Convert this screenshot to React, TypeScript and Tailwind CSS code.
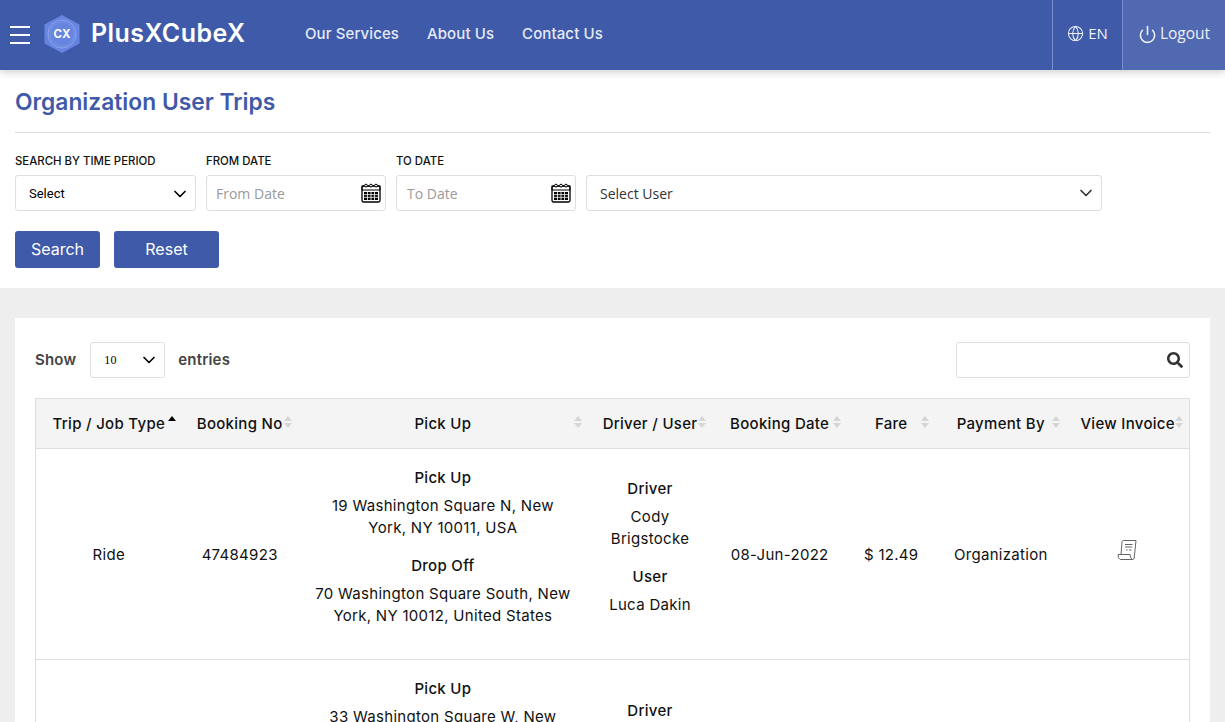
import React from 'react';
import { ChevronDown, Globe, Power } from 'lucide-react';
import { FaSearch } from 'react-icons/fa';

const columns = [
  { label: 'Trip / Job Type', width: 'w-[146px]', active: true },
  { label: 'Booking No', width: 'w-[116px]' },
  { label: 'Pick Up', width: 'w-[290px]' },
  { label: 'Driver / User', width: 'w-[124px]' },
  { label: 'Booking Date', width: 'w-[135px]' },
  { label: 'Fare', width: 'w-[88px]' },
  { label: 'Payment By', width: 'w-[131px]' },
  { label: 'View Invoice', width: 'w-[123px]' },
];

const trips = [
  {
    type: 'Ride',
    booking: '47484923',
    pickup: '19 Washington Square N, New York, NY 10011, USA',
    dropoff: '70 Washington Square South, New York, NY 10012, United States',
    driver: 'Cody Brigstocke',
    user: 'Luca Dakin',
    date: '08-Jun-2022',
    fare: '$ 12.49',
  },
  {
    type: 'Ride',
    booking: '47484917',
    pickup: '33 Washington Square W, New York, NY 10011, USA',
    dropoff: '70 Washington Square South, New York, NY 10012, United States',
    driver: 'Luca Dakin',
    user: 'Cody Dakin',
    date: '08-Jun-2022',
    fare: '$ 12.49',
  },
];

const CalendarIcon = () => (
  <svg width="20" height="20" viewBox="0 0 20 20" className="text-black">
    <rect x="1" y="3" width="18" height="16" rx="1.5" fill="none" stroke="currentColor" strokeWidth="1.3" />
    <rect x="1" y="3" width="18" height="4" fill="none" stroke="currentColor" strokeWidth="1" />
    <rect x="3" y="9" width="14" height="8" fill="currentColor" />
    <path d="M3 11.6h14M3 14.3h14M6.5 9v8M10 9v8M13.5 9v8" stroke="#fff" strokeWidth="0.8" />
    <circle cx="5" cy="2.6" r="1.4" fill="#fff" stroke="currentColor" />
    <circle cx="10" cy="2.6" r="1.4" fill="#fff" stroke="currentColor" />
    <circle cx="15" cy="2.6" r="1.4" fill="#fff" stroke="currentColor" />
  </svg>
);

const Logo = () => (
  <svg width="38" height="40" viewBox="0 0 38 40">
    <path d="M19 1 L36.5 10.5 V29.5 L19 39 L1.5 29.5 V10.5 Z" fill="#6685e0" />
    <circle cx="19" cy="20" r="14" fill="none" stroke="#9db2ee" strokeWidth="0.7" />
    <circle cx="19" cy="20" r="12" fill="none" stroke="#88a0e8" strokeWidth="0.5" />
    <text x="19" y="24" textAnchor="middle" fill="#fff" fontSize="11.5" fontWeight="700" fontFamily="Inter, sans-serif">CX</text>
  </svg>
);

const InvoiceIcon = () => (
  <svg width="20" height="20" viewBox="0 0 20 20" fill="none" stroke="#666" strokeWidth="1" className="mx-auto mb-[8px] -translate-x-[1px]">
    <path d="M4 14.5 L5 1.8 Q5.1 .5 6.4 .5 H19 L17.2 18 Q17 19.5 15.2 19.5" />
    <path d="M1 14.5 H13 Q13.2 18 15.2 19.5 H3.2 Q1 18.5 1 14.5 Z" />
    <path d="M8 4.5h7.5M8 7h7.2M9 10h1.5M12 10h2.5" />
  </svg>
);

const SortIcon = ({ active }: { active?: boolean }) => (
  <span className="absolute right-[5px] top-[17px] flex w-[10px] flex-col items-center gap-[2px]">
    <span className={`h-0 w-0 border-x-[4px] border-b-[5px] border-x-transparent ${active ? 'border-b-black' : 'border-b-[#d6d6d6]'}`} />
    {!active && <span className="h-0 w-0 border-x-[4px] border-t-[5px] border-x-transparent border-t-[#d6d6d6]" />}
  </span>
);

const Field = ({ label, width, children }: { label?: string; width: string; children: React.ReactNode }) => (
  <div className={`flex flex-col ${width}`}>
    <label className="mb-[6px] h-[17px] pt-[1px] text-[11.4px] leading-[16px] font-medium text-[#111]">{label}</label>
    {children}
  </div>
);

const DateInput = ({ placeholder, pad }: { placeholder: string; pad: string }) => (
  <div className={`flex h-[36px] items-center justify-between rounded-[3px] border border-[#dfdfdf] pr-[4px] ${pad} font-['Open_Sans',sans-serif] text-[14px] text-[#9a9a9a]`}>
    <span>{placeholder}</span>
    <CalendarIcon />
  </div>
);

export default function App() {
  return (
    <div className="flex h-screen flex-col overflow-hidden bg-[#eeeeee] font-['Inter',sans-serif] text-[#111]">
      <header className="z-10 flex h-[70px] shrink-0 items-stretch bg-[#3e5aa8] text-white shadow-[0_2px_8px_rgba(0,0,0,0.2)]">
        <div className="flex items-center pl-[10px]">
          <div className="flex w-[20px] flex-col gap-[6px]">
            <span className="h-[2px] bg-white" />
            <span className="h-[2px] bg-white" />
            <span className="h-[2px] bg-white" />
          </div>
          <div className="-mt-[2px] ml-[13px]"><Logo /></div>
          <span className="-mt-[2px] ml-[10px] w-[156px] text-[25px] font-semibold tracking-[0.45px]">PlusXCubeX</span>
        </div>
        <nav className="-mt-[2px] ml-[58px] flex items-center gap-[28px] text-[15px] font-medium tracking-[0.1px] text-[#e6eaf6]">
          <a>Our Services</a>
          <a>About Us</a>
          <a>Contact Us</a>
        </nav>
        <div className="ml-auto flex items-stretch font-['Open_Sans',sans-serif] text-[15px] text-[#eef1f9]">
          <div className="flex w-[71px] items-center justify-center gap-[4px] border-x border-[#7a8fc8] pb-[3px]">
            <Globe size={17} strokeWidth={1.5} />
            <span>EN</span>
          </div>
          <div className="flex w-[102px] items-center justify-center gap-[3px] bg-[#5069b0] pb-[2px]">
            <Power size={19} strokeWidth={2} />
            <span className="text-[15.5px]">Logout</span>
          </div>
        </div>
      </header>

      <section className="h-[218px] shrink-0 bg-white px-[15px]">
        <h1 className="h-[63px] border-b border-[#d9d9d9] pt-[17px] text-[22.8px] leading-[30px] font-semibold text-[#3e5aa8]">
          Organization User Trips
        </h1>
        <div className="mt-[19px] flex gap-[10px]">
          <Field label="SEARCH BY TIME PERIOD" width="w-[181px]">
            <div className="flex h-[36px] items-center justify-between rounded-[3px] border border-[#dfdfdf] pt-[1px] pr-[5px] pl-[13px] font-['Roboto',sans-serif] text-[13px] text-black">
              <span>Select</span>
              <ChevronDown size={20} strokeWidth={2} />
            </div>
          </Field>
          <Field label="FROM DATE" width="w-[180px]">
            <DateInput placeholder="From Date" pad="pl-[9px]" />
          </Field>
          <Field label="TO DATE" width="w-[180px]">
            <DateInput placeholder="To Date" pad="pl-[10px]" />
          </Field>
          <Field width="w-[516px]">
            <div className="flex h-[36px] items-center justify-between rounded-[3px] border border-[#dfdfdf] pr-[5px] pl-[13px] font-['Open_Sans',sans-serif] text-[14px] text-[#333]">
              <span>Select User</span>
              <ChevronDown size={20} strokeWidth={2} />
            </div>
          </Field>
        </div>
        <div className="mt-[20px] flex gap-[14px] text-[16px] text-white">
          <button className="h-[37px] w-[85px] rounded-[3px] bg-[#3e5aa8] pb-[1px]">Search</button>
          <button className="h-[37px] w-[105px] rounded-[3px] bg-[#3e5aa8] pb-[1px]">Reset</button>
        </div>
      </section>

      <main className="flex-1 px-[15px] pt-[30px]">
        <div className="bg-white px-[20px] pt-[24px]">
          <div className="flex h-[36px] items-center justify-between">
            <div className="flex items-center text-[15px] font-semibold tracking-[0.2px] text-[#444]">
              <span>Show</span>
              <div className="mr-[13px] ml-[14px] flex h-[36px] w-[75px] items-center justify-between rounded-[3px] border border-[#dfdfdf] pr-[5px] pl-[13px] font-['Liberation_Serif',serif] text-[12px] font-normal text-black">
                <span>10</span>
                <ChevronDown size={20} strokeWidth={2} />
              </div>
              <span>entries</span>
            </div>
            <div className="flex h-[36px] w-[234px] items-center justify-end rounded-[3px] border border-[#dfdfdf] pr-[6px] text-[#333]">
              <FaSearch size={16} />
            </div>
          </div>

          <table className="mt-[20px] w-[1155px] table-fixed border-collapse border border-[#dedede] text-[15px] tracking-[0.3px]">
            <colgroup>
              {columns.map((col) => <col key={col.label} className={col.width} />)}
            </colgroup>
            <thead>
              <tr className="h-[50px] border-b border-[#dedede] bg-[#f4f4f4]">
                {columns.map((col) => (
                  <th key={col.label} className="relative whitespace-nowrap pt-[2px] font-medium">
                    {col.label}
                    <SortIcon active={col.active} />
                  </th>
                ))}
              </tr>
            </thead>
            <tbody>
              {trips.map((trip) => (
                <tr key={trip.booking} className="h-[211px] border-b border-[#dedede] text-center">
                  <td className="pt-[2px]">{trip.type}</td>
                  <td className="pt-[2px]">{trip.booking}</td>
                  <td className="px-[15px] pb-[14px] leading-[22px]">
                    <div className="font-medium">Pick Up</div>
                    <div className="mt-[6px]">{trip.pickup}</div>
                    <div className="mt-[16px] font-medium">Drop Off</div>
                    <div className="mt-[6px]">{trip.dropoff}</div>
                  </td>
                  <td className="px-[15px] pb-[14px] leading-[22px]">
                    <div className="font-medium">Driver</div>
                    <div className="mt-[6px]">{trip.driver}</div>
                    <div className="mt-[16px] font-medium">User</div>
                    <div className="mt-[6px]">{trip.user}</div>
                  </td>
                  <td className="pt-[2px]">{trip.date}</td>
                  <td className="pt-[2px]">{trip.fare}</td>
                  <td className="pt-[2px]">Organization</td>
                  <td>
                    <InvoiceIcon />
                  </td>
                </tr>
              ))}
            </tbody>
          </table>
        </div>
      </main>
    </div>
  );
}
